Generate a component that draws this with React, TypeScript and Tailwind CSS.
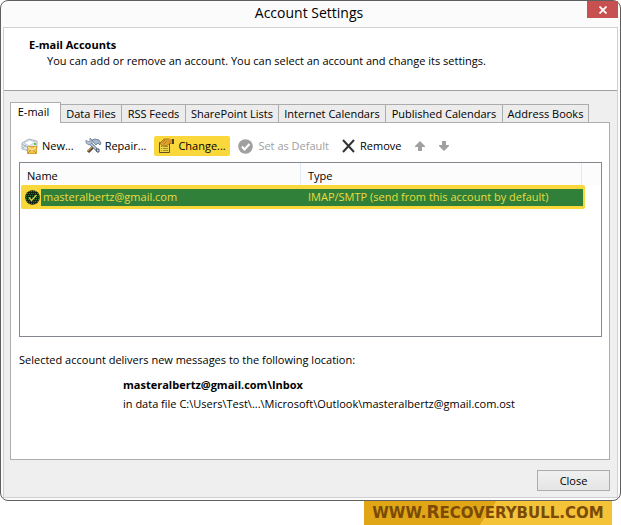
import { ReactNode } from 'react';

const tabs = [
  { label: 'Data Files', width: 'w-[61px]' },
  { label: 'RSS Feeds', width: 'w-[64px]' },
  { label: 'SharePoint Lists', width: 'w-[93px]' },
  { label: 'Internet Calendars', width: 'w-[107px]' },
  { label: 'Published Calendars', width: 'w-[117px]' },
  { label: 'Address Books', width: 'w-[86px]' },
];

function NewMailIcon() {
  return (
    <svg width="17" height="17" viewBox="0 0 17 17" aria-hidden="true">
      <path d="M1 5 8 1l8 2v7l-8 3-7-2z" fill="#dfe6ec" stroke="#9aa7b3" strokeWidth=".8" />
      <path d="M3 5 8 2l6 2-6 4z" fill="#fff" stroke="#b6c1cb" strokeWidth=".7" />
      <path d="m1 11 4-4M1 6l5 3" fill="none" stroke="#a9b5c1" />
      <path d="M13 5h2v2h-2z" fill="#58cf48" />
      <path d="M6 8h10v8H6z" fill="#d9a032" />
      <path d="M7 9h8v6H7z" fill="#f3c453" />
      <path d="m7 9 4 3 4-3" fill="none" stroke="#fff3c8" />
      <path d="m7 15 3-3m5 3-3-3" fill="none" stroke="#b98528" strokeWidth=".8" />
    </svg>
  );
}

function RepairIcon() {
  return (
    <svg width="17" height="16" viewBox="0 0 17 16" aria-hidden="true">
      <path d="M9 8 3 14" stroke="#4c3a28" strokeWidth="3" />
      <path d="M9 7 3 13" stroke="#c8955a" strokeWidth="1.500" />
      <path d="m4 4 9 9" stroke="#5b6c82" strokeWidth="3" />
      <path d="m4 4 9 9" stroke="#c3d0dd" strokeWidth="1.500" />
      <path d="M1 2v3l3 2 3-2V2L5 0v3L4 4 2 3z" fill="#b7c6d7" stroke="#71839a" strokeWidth=".8" />
      <path d="m7 2 3-1 4 1 2 3-1 2-2-2-2 2-3-3z" fill="#a7b7cb" stroke="#62748b" strokeWidth=".8" />
      <path d="M11 11h3v3h-2z" fill="#d5dee8" stroke="#49586c" />
    </svg>
  );
}

function ChangeIcon() {
  return (
    <svg width="17" height="16" viewBox="0 0 17 16" aria-hidden="true">
      <path d="M1.500 4.500h10v10h-10z" fill="#f0d64a" stroke="#5f5220" />
      <path d="M3 8.500h1M5 8.500h5M3 10.500h1M5 10.500h5M3 12.500h1M5 12.500h5" stroke="#8f7a28" strokeWidth=".8" />
      <path d="m2 5 4-4h5l3 1v3l-3 1-3 2-2-1-2 1z" fill="#e3a22c" stroke="#8d621a" strokeWidth=".7" />
      <path d="m4 5 3-3M6 6l3-3" stroke="#9b6b1c" strokeWidth=".7" />
      <path d="M10 1h4v4h-4z" fill="#df9620" />
      <path d="M14 1h2v5h-2z" fill="#4a4228" />
    </svg>
  );
}

function CheckCircle({ dark = false }: { dark?: boolean }) {
  return (
    <svg width="15" height="15" viewBox="0 0 15 15" className="shrink-0" aria-hidden="true">
      <circle cx="7.500" cy="7.500" r="7.300" fill={dark ? '#10250f' : '#a0a0a0'} />
      {dark && (
        <path
          d="M4 1.500h8M2 3.500h11M1 5.500h13M1 7.500h13M1 9.500h13M2 11.500h11M4 13.500h7"
          stroke="#2f7a38"
          strokeDasharray="1 1"
        />
      )}
      <path d="m4 7.500 2.500 3L11.500 5" fill="none" stroke={dark ? '#d8cf4a' : '#fff'} strokeWidth={dark ? 1.3 : 2} />
    </svg>
  );
}

function RemoveIcon() {
  return (
    <svg width="13" height="14" viewBox="0 0 13 14" aria-hidden="true">
      <path d="m1 1 11 12M12 1 1 13" stroke="#333" strokeWidth="2" />
    </svg>
  );
}

function ArrowIcon({ down = false }: { down?: boolean }) {
  return (
    <svg width="10" height="10" viewBox="0 0 10 10" className={down ? 'rotate-180' : ''} aria-hidden="true">
      <path d="m5 0 5 5v1H7v4H3V6H0V5z" fill="#a0a0a0" />
    </svg>
  );
}

function ToolButton({ icon, children, className = '', disabled }: {
  icon: ReactNode;
  children: ReactNode;
  className?: string;
  disabled?: boolean;
}) {
  return (
    <button type="button" disabled={disabled} className={`flex h-5 items-center whitespace-nowrap ${className}`}>
      {icon}
      {children}
    </button>
  );
}

export default function App() {
  return (
    <div className="bg-white font-['Open_Sans','Noto_Sans',sans-serif] text-[11px] leading-4 text-black">
      <main className="flex flex-col rounded-lg border border-[#5f5f5f] bg-[#fbfbfb] px-0.5 pb-0.5">
        <header className="flex h-[26px] items-start">
          <div className="w-7" />
          <h1 className="flex-1 text-center text-[14px] leading-6">Account Settings</h1>
          <button type="button" aria-label="Close window" className="flex h-[17px] w-[31px] items-center justify-center bg-[#c75050]">
            <svg width="8" height="8" viewBox="0 0 8 8" aria-hidden="true">
              <path d="m.5.500 7 7m0-7-7 7" stroke="#fff" strokeWidth="1.800" />
            </svg>
          </button>
        </header>

        <div className="border border-[#d0d0d0] bg-[#efefef]">
          <section className="h-[63px] border-b border-[#a0a0a0] bg-white pt-[9px] pl-[25px]">
            <h2 className="font-bold">E-mail Accounts</h2>
            <p className="pl-[18px]">You can add or remove an account. You can select an account and change its settings.</p>
          </section>

          <section className="pt-[11px] pr-[7px] pl-1.5">
            <div role="tablist" className="flex items-end">
              <button type="button" role="tab" aria-selected="true" className="relative z-10 -mb-px h-[21px] w-[51px] border border-b-0 border-[#acacac] bg-white pr-1 pb-[3px]">
                E-mail
              </button>
              {tabs.map((tab) => (
                <button
                  key={tab.label}
                  type="button"
                  role="tab"
                  aria-selected="false"
                  className={`h-[18px] border border-b-0 border-l-0 border-[#acacac] bg-[#ececec] text-center whitespace-nowrap ${tab.width}`}
                >
                  {tab.label}
                </button>
              ))}
            </div>

            <div role="tabpanel" className="h-[338px] border border-[#acacac] bg-white px-2 pt-[13px] pr-[7px]">
              <div className="flex items-center pl-0.5">
                <ToolButton icon={<NewMailIcon />} className="gap-1">New...</ToolButton>
                <ToolButton icon={<RepairIcon />} className="ml-[11px] gap-[3px]">Repair...</ToolButton>
                <ToolButton icon={<ChangeIcon />} className="ml-2 w-[76px] gap-[3px] rounded-xs bg-[#fad73a] pl-1">Change...</ToolButton>
                <ToolButton icon={<CheckCircle />} className="ml-2 gap-[5px] text-[#a0a0a0]" disabled>Set as Default</ToolButton>
                <ToolButton icon={<RemoveIcon />} className="ml-[13px] gap-[5px]">Remove</ToolButton>
                <button type="button" disabled aria-label="Move up" className="ml-3.5"><ArrowIcon /></button>
                <button type="button" disabled aria-label="Move down" className="ml-3.5"><ArrowIcon down /></button>
              </div>

              <div className="mt-1.5 h-[175px] border border-[#828790] bg-white">
                <table className="w-full table-fixed border-collapse text-left">
                  <thead>
                    <tr className="h-[22px] bg-[#fcfcfc]">
                      <th className="w-[281px] p-0 font-normal">
                        <div className="h-[22px] border-r border-[#dfeafa] pt-[5px] pl-[7px]">Name</div>
                      </th>
                      <th className="p-0 pr-[3px] font-normal">
                        <div className="h-[22px] border-r border-[#dfeafa] pt-[5px] pl-[7px]">Type</div>
                      </th>
                      <th className="w-4" />
                    </tr>
                  </thead>
                  <tbody>
                    <tr className="h-6 text-[#e9dc3c]">
                      <td className="p-0 pl-px">
                        <div className="flex h-6 items-center rounded-l-xs bg-[#fad73a] pl-1">
                          <CheckCircle dark />
                          <span className="ml-px h-[17px] flex-1 bg-[#31803a] pl-0.5">masteralbertz@gmail.com</span>
                        </div>
                      </td>
                      <td className="p-0">
                        <div className="flex h-6 items-center rounded-r-xs bg-[#fad73a] pr-0.5">
                          <span className="h-[17px] flex-1 bg-[#31803a] pl-[7px]">IMAP/SMTP (send from this account by default)</span>
                        </div>
                      </td>
                      <td />
                    </tr>
                  </tbody>
                </table>
              </div>

              <p className="mt-[15px]">Selected account delivers new messages to the following location:</p>
              <div className="pl-[104px]">
                <p className="mt-[9px] font-bold">masteralbertz@gmail.com\Inbox</p>
                <p className="mt-[3px]">in data file C:\Users\Test\...\Microsoft\Outlook\masteralbertz@gmail.com.ost</p>
              </div>
            </div>

            <div className="flex justify-end pt-2.5 pb-1.5">
              <button type="button" className="h-[21px] w-[73px] border border-[#acacac] bg-linear-to-b from-[#f0f0f0] to-[#e5e5e5]">Close</button>
            </div>
          </section>
        </div>
      </main>

      <footer className="flex justify-end pr-[9px]">
        <a
          href="#"
          className="flex h-6 w-[248px] items-baseline justify-center bg-[linear-gradient(125deg,#e0a616_50%,#f5c338_50%)] font-['DejaVu_Sans',sans-serif] text-[15px] leading-[22px] font-bold whitespace-nowrap text-[#7b4b06] uppercase"
        >
          www.<span className="text-[17px]">R</span>ecoverybull.com
        </a>
      </footer>
    </div>
  );
}
